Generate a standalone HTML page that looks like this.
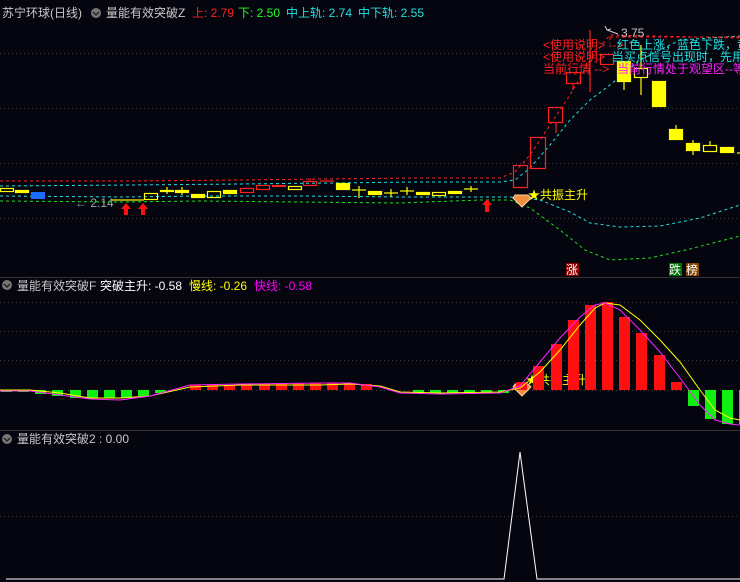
<!DOCTYPE html>
<html><head><meta charset="utf-8"><style>
html,body{margin:0;padding:0;background:#05050f;}
svg{display:block;}
text{font-family:"Liberation Sans","Noto Sans CJK SC",sans-serif;font-size:12px;}
</style></head><body>
<svg width="740" height="582" viewBox="0 0 740 582" xmlns="http://www.w3.org/2000/svg">
<rect width="740" height="582" fill="#05050f"/>
<!-- grids -->
<g stroke="#3a3a3a" stroke-width="1" stroke-dasharray="1,3">
<line x1="0" y1="53.5" x2="740" y2="53.5"/>
<line x1="0" y1="108.5" x2="740" y2="108.5"/>
<line x1="0" y1="163.5" x2="740" y2="163.5"/>
<line x1="0" y1="218.5" x2="740" y2="218.5"/>
<line x1="0" y1="302.5" x2="740" y2="302.5"/>
<line x1="0" y1="331.5" x2="740" y2="331.5"/>
<line x1="0" y1="360.5" x2="740" y2="360.5"/>
<line x1="0" y1="390.5" x2="740" y2="390.5"/>
<line x1="0" y1="516.5" x2="740" y2="516.5"/>
</g>
<line x1="0" y1="277.5" x2="740" y2="277.5" stroke="#333" />
<line x1="0" y1="430.5" x2="740" y2="430.5" stroke="#333" />

<!-- headers -->
<text x="2" y="17" fill="#c8c8c8">苏宁环球(日线)</text>
<circle cx="96" cy="13" r="5" fill="#777"/><path d="M93 12l3 3 3-3" stroke="#222" stroke-width="1.5" fill="none"/>
<text x="106" y="17" fill="#c8c8c8">量能有效突破Z</text>
<text x="192" y="17" fill="#ff2020">上: 2.79</text>
<text x="238" y="17" fill="#20ff20">下: 2.50</text>
<text x="286" y="17" fill="#20e0e0">中上轨: 2.74</text>
<text x="358" y="17" fill="#20e0e0">中下轨: 2.55</text>

<circle cx="7" cy="285" r="5" fill="#777"/><path d="M4 284l3 3 3-3" stroke="#222" stroke-width="1.5" fill="none"/>
<text x="17" y="290" fill="#c8c8c8">量能有效突破F</text>
<text x="100" y="290" fill="#ffffff">突破主升: -0.58</text>
<text x="189" y="290" fill="#ffff00">慢线: -0.26</text>
<text x="254" y="290" fill="#ff00ff">快线: -0.58</text>

<circle cx="7" cy="439" r="5" fill="#777"/><path d="M4 438l3 3 3-3" stroke="#222" stroke-width="1.5" fill="none"/>
<text x="17" y="443" fill="#c8c8c8">量能有效突破2 : 0.00</text>

<!-- main bands -->
<g fill="none" stroke-width="1" stroke-dasharray="3,3">
<path d="M0 181 L130 181 L240 180 L320 179 L420 178 L500 178 L515 172 L530 155 L550 125 L570 95 L590 60 L610 35 L740 38" stroke="#ff2020"/>
<path d="M0 186 L130 185 L240 184 L330 183 L420 182 L500 182 L515 180 L530 168 L550 145 L570 120 L590 100 L610 85 L640 60 L680 40 L740 36" stroke="#20e0e0"/>
<path d="M0 196 L120 197 L200 196 L300 196 L400 197 L480 197 L510 197 L540 200 L570 212 L590 223 L620 227 L660 226 L700 218 L740 205" stroke="#20e0e0"/>
<path d="M0 201 L120 202 L200 201 L300 202 L400 203 L480 200 L510 200 L530 208 L560 230 L585 250 L610 260 L650 258 L690 249 L740 236" stroke="#20e020"/>
</g>

<!-- candles -->
<g stroke-width="1.2">
<g fill="none" stroke="#ffff00">
<rect x="0.5" y="188.5" width="13" height="3"/>
<rect x="144.5" y="193.5" width="13" height="6"/>
<rect x="207.5" y="191.5" width="13" height="6"/>
<rect x="288.5" y="186.5" width="13" height="3"/>
<rect x="432.5" y="192.5" width="13" height="3"/>
<rect x="634.5" y="68.5" width="13" height="9"/><line x1="641" y1="45" x2="641" y2="68"/><line x1="641" y1="77" x2="641" y2="95"/>
<rect x="703.5" y="145.5" width="13" height="6"/><line x1="710" y1="141" x2="710" y2="145"/>
</g>
<g fill="#ffff00" stroke="#ffff00">
<rect x="15.5" y="190.5" width="13" height="2"/>
<rect x="160.5" y="190.5" width="13" height="1"/><line x1="167" y1="187" x2="167" y2="194"/>
<rect x="175.5" y="190.5" width="13" height="2"/><line x1="182" y1="187" x2="182" y2="195"/>
<rect x="191.5" y="194.5" width="13" height="3"/>
<rect x="223.5" y="190.5" width="13" height="3"/>
<rect x="336.5" y="183.5" width="13" height="6"/>
<line x1="352" y1="190" x2="366" y2="190"/><line x1="359" y1="186" x2="359" y2="198"/>
<rect x="368.5" y="191.5" width="13" height="3"/>
<line x1="384" y1="193" x2="398" y2="193"/><line x1="391" y1="189" x2="391" y2="197"/>
<line x1="400" y1="191" x2="414" y2="191"/><line x1="407" y1="187" x2="407" y2="195"/>
<rect x="416.5" y="192.5" width="13" height="2"/>
<rect x="448.5" y="191.5" width="13" height="2"/>
<line x1="464" y1="189" x2="478" y2="189"/><line x1="471" y1="186" x2="471" y2="192"/>
<line x1="112" y1="200" x2="128" y2="200"/><line x1="128" y1="200" x2="144" y2="200"/>
<rect x="617.5" y="61.5" width="13" height="20"/><line x1="624" y1="82" x2="624" y2="90"/>
<rect x="652.5" y="81.5" width="13" height="25"/>
<rect x="669.5" y="129.5" width="13" height="10"/><line x1="676" y1="125" x2="676" y2="130"/>
<rect x="686.5" y="143.5" width="13" height="7"/><line x1="693" y1="140" x2="693" y2="155"/>
<rect x="720.5" y="147.5" width="13" height="5"/>
<line x1="737" y1="153" x2="740" y2="153"/>
</g>
<rect x="31" y="192" width="14" height="7" fill="#1e6cff"/>
<g fill="none" stroke="#ff2020">
<rect x="240.5" y="188.5" width="13" height="4"/>
<rect x="256.5" y="185.5" width="13" height="4"/>
<line x1="272" y1="186" x2="286" y2="186" stroke-width="2"/>
<rect x="303.5" y="181.5" width="13" height="4"/><line x1="310" y1="178" x2="310" y2="181"/>
<line x1="320" y1="181" x2="334" y2="181"/>
<rect x="513.5" y="165.5" width="14" height="22"/>
<rect x="530.5" y="137.5" width="15" height="31"/>
<rect x="548.5" y="107.5" width="14" height="15"/><line x1="556" y1="123" x2="556" y2="133"/>
<rect x="566.5" y="72.5" width="14" height="11"/><line x1="573" y1="84" x2="573" y2="90"/>
<rect x="600.5" y="54.5" width="13" height="10"/>
<line x1="590" y1="30" x2="590" y2="92"/>
</g>
</g>

<!-- price labels -->
<text x="75" y="207" fill="#a0a0a0">← 2.14</text>
<path d="M607 30 l-2 -4 M607 30 l4 -1 M607 30 L618 34" stroke="#ccc" fill="none"/>
<text x="621" y="37" fill="#c8c8c8">3.75</text>

<!-- arrows -->
<g fill="#ff1010">
<path d="M126 203 l-5 6 h3 v6 h4 v-6 h3z"/>
<path d="M143 203 l-5 6 h3 v6 h4 v-6 h3z"/>
<path d="M487 199 l-5 6 h3 v7 h4 v-7 h3z"/>
</g>
<!-- diamonds -->
<path d="M515 195 h13 l3 3 -9 9 -9 -9z" fill="#f09040" stroke="#ffd0a0"/>
<path d="M515 384 h13 l3 3 -9 9 -9 -9z" fill="#f09040" stroke="#ffd0a0"/>
<text x="528" y="199" fill="#ffff00">★共振主升</text>
<text x="526" y="384" fill="#ffff00">★共振主升</text>

<!-- explanation -->
<path d="M610 37 H740" stroke="#ff2020" stroke-dasharray="3,3"/>
<path d="M610 37 V44" stroke="#ff2020" stroke-dasharray="3,3"/>
<text x="543" y="49" fill="#ff2020">&lt;使用说明&gt; --&gt;</text>
<text x="617" y="49" fill="#20e0e0">红色上涨，蓝色下跌，黄</text>
<text x="543" y="61" fill="#ff2020">&lt;使用说明&gt;</text>
<text x="612" y="61" fill="#20e0e0">当买点信号出现时，先用</text>
<text x="543" y="73" fill="#ff2020">当前行情 --&gt;</text>
<text x="617" y="73" fill="#ff20ff">当前行情处于观望区--等</text>

<!-- badges -->
<rect x="566" y="263" width="13" height="13" fill="#8a0000"/><text x="566" y="274" fill="#fff" font-size="11">涨</text>
<rect x="669" y="263" width="13" height="13" fill="#007000"/><text x="669" y="274" fill="#fff" font-size="11">跌</text>
<rect x="686" y="263" width="13" height="13" fill="#804000"/><text x="686" y="274" fill="#fff" font-size="11">榜</text>

<!-- middle panel bars -->
<g fill="#10f010">
<rect x="1" y="390" width="11" height="2"/>
<rect x="18" y="390" width="11" height="2"/>
<rect x="35" y="390" width="11" height="4"/>
<rect x="52" y="390" width="11" height="6"/>
<rect x="70" y="390" width="11" height="8"/>
<rect x="87" y="390" width="11" height="8"/>
<rect x="104" y="390" width="11" height="8"/>
<rect x="121" y="390" width="11" height="8"/>
<rect x="138" y="390" width="11" height="6"/>
<rect x="155" y="390" width="11" height="3"/>
<rect x="413" y="390" width="11" height="3"/>
<rect x="430" y="390" width="11" height="3"/>
<rect x="447" y="390" width="11" height="3"/>
<rect x="464" y="390" width="11" height="3"/>
<rect x="481" y="390" width="11" height="3"/>
<rect x="498" y="390" width="11" height="3"/>
<rect x="688" y="390" width="11" height="16"/>
<rect x="705" y="390" width="11" height="29"/>
<rect x="722" y="390" width="11" height="34"/>
<rect x="739" y="390" width="2" height="34"/>
</g>
<g fill="#ff1010">
<rect x="190" y="385" width="11" height="5"/>
<rect x="207" y="385" width="11" height="5"/>
<rect x="224" y="385" width="11" height="5"/>
<rect x="241" y="385" width="11" height="5"/>
<rect x="259" y="384" width="11" height="6"/>
<rect x="276" y="384" width="11" height="6"/>
<rect x="293" y="383" width="11" height="7"/>
<rect x="310" y="383" width="11" height="7"/>
<rect x="327" y="383" width="11" height="7"/>
<rect x="344" y="383" width="11" height="7"/>
<rect x="361" y="384" width="11" height="6"/>
<rect x="516" y="382" width="11" height="8"/>
<rect x="533" y="366" width="11" height="24"/>
<rect x="551" y="344" width="11" height="46"/>
<rect x="568" y="320" width="11" height="70"/>
<rect x="585" y="305" width="11" height="85"/>
<rect x="602" y="302" width="11" height="88"/>
<rect x="619" y="317" width="11" height="73"/>
<rect x="636" y="333" width="11" height="57"/>
<rect x="654" y="355" width="11" height="35"/>
<rect x="671" y="382" width="11" height="8"/>
</g>
<path d="M0 390 L30 390 L60 393 L90 398 L120 398 L150 396 L190 387 L240 385 L320 385 L350 384 L380 386 L400 392 L440 393 L500 392 L520 388 L540 372 L560 350 L580 325 L595 308 L605 303 L620 305 L640 320 L660 340 L680 362 L700 390 L715 410 L730 418 L740 420" fill="none" stroke="#ffff00" stroke-width="1"/>
<path d="M0 391 L30 391 L60 395 L90 399 L120 400 L150 396 L190 385 L240 384 L320 383 L350 383 L380 387 L400 393 L440 394 L500 393 L520 386 L540 362 L560 338 L580 317 L595 305 L605 303 L620 310 L640 330 L660 352 L680 378 L700 405 L715 420 L730 424 L740 425" fill="none" stroke="#ff20ff" stroke-width="1"/>

<!-- bottom panel -->
<path d="M6 579 L504 579 L520 452 L537 579 L740 579" fill="none" stroke="#ffffff" stroke-width="1"/>
</svg>
</body></html>
